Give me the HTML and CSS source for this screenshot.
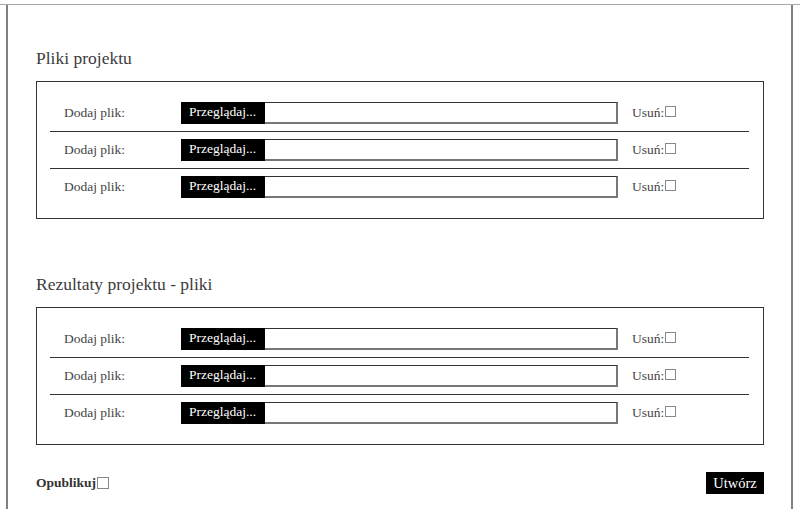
FILE: index.html
```html
<!DOCTYPE html>
<html lang="pl">
<head>
    <meta charset="UTF-8">
    <meta name="viewport" content="width=device-width, initial-scale=1.0">
    <title>Projekt - pliki</title>
    <link rel="stylesheet" href="styles.css">
</head>
<body>
    <div class="frame">
        <div class="content">
            <h2>Pliki projektu</h2>
            <div class="box">
                <div class="row">
                    <span class="label">Dodaj plik:</span>
                    <span class="file"><span class="file-btn">Przeglądaj...</span></span>
                    <label class="remove">Usuń:<input type="checkbox"></label>
                </div>
                <div class="row">
                    <span class="label">Dodaj plik:</span>
                    <span class="file"><span class="file-btn">Przeglądaj...</span></span>
                    <label class="remove">Usuń:<input type="checkbox"></label>
                </div>
                <div class="row">
                    <span class="label">Dodaj plik:</span>
                    <span class="file"><span class="file-btn">Przeglądaj...</span></span>
                    <label class="remove">Usuń:<input type="checkbox"></label>
                </div>
            </div>

            <h2 class="second">Rezultaty projektu - pliki</h2>
            <div class="box">
                <div class="row">
                    <span class="label">Dodaj plik:</span>
                    <span class="file"><span class="file-btn">Przeglądaj...</span></span>
                    <label class="remove">Usuń:<input type="checkbox"></label>
                </div>
                <div class="row">
                    <span class="label">Dodaj plik:</span>
                    <span class="file"><span class="file-btn">Przeglądaj...</span></span>
                    <label class="remove">Usuń:<input type="checkbox"></label>
                </div>
                <div class="row">
                    <span class="label">Dodaj plik:</span>
                    <span class="file"><span class="file-btn">Przeglądaj...</span></span>
                    <label class="remove">Usuń:<input type="checkbox"></label>
                </div>
            </div>

            <div class="footer">
                <label class="publish">Opublikuj<input type="checkbox"></label>
                <button class="submit">Utwórz</button>
            </div>
        </div>
    </div>
</body>
</html>
```

FILE: styles.css
```css
body {
    margin: 0;
    font-family: "Liberation Serif", serif;
    color: #444;
    background-color: white;
}

.frame {
    margin-top: 4px;
    border-top: 1px solid #a8a8a8;
}

.content {
    margin: 0 7px 0 6px;
    padding: 43px 27px 0 28px;
    border-left: 2px solid #808080;
    border-right: 2px solid #808080;
    min-height: calc(100vh - 5px);
    box-sizing: border-box;
}

h2 {
    font-size: 17.5px;
    font-weight: normal;
    line-height: 20px;
    margin: 0 0 13px 0;
    color: #3c3c3c;
}

h2.second {
    margin-top: 55px;
}

.box {
    border: 1px solid #333;
    padding: 13px 14px 13px 13px;
}

.row {
    display: flex;
    align-items: center;
    padding: 7px 0 7px 14px;
    border-bottom: 1px solid #333;
    font-size: 13.5px;
}

.row:last-child {
    border-bottom: none;
}

.label {
    width: 117px;
}

.file {
    display: flex;
    width: 437px;
    height: 22px;
    box-sizing: border-box;
    border-top: 1px solid #333;
    border-left: 1px solid #333;
    border-right: 2px solid #777;
    border-bottom: 2px solid #777;
    background-color: white;
}

.file-btn {
    background-color: black;
    color: white;
    width: 84px;
    padding-left: 8px;
    box-sizing: border-box;
    font-size: 13.5px;
    line-height: 20px;
    margin: -1px 0 -2px -1px;
    height: 22px;
}

.remove {
    display: flex;
    align-items: center;
    margin-left: 14px;
}

input[type="checkbox"] {
    appearance: none;
    width: 11px;
    height: 11px;
    margin: 0 0 3px 1px;
    border: 1px solid #888;
    background-color: white;
}

.footer {
    display: flex;
    justify-content: space-between;
    align-items: center;
    margin-top: 27px;
}

.publish {
    display: flex;
    align-items: center;
    font-weight: bold;
    font-size: 13.5px;
    color: #333;
}

.publish input[type="checkbox"] {
    width: 12px;
    height: 12px;
    margin: 0 0 0 1px;
}

.submit {
    background-color: black;
    color: white;
    border: none;
    border-radius: 0;
    font-family: "Liberation Serif", serif;
    font-size: 14.5px;
    height: 22px;
    width: 58px;
    padding: 0;
}
```
